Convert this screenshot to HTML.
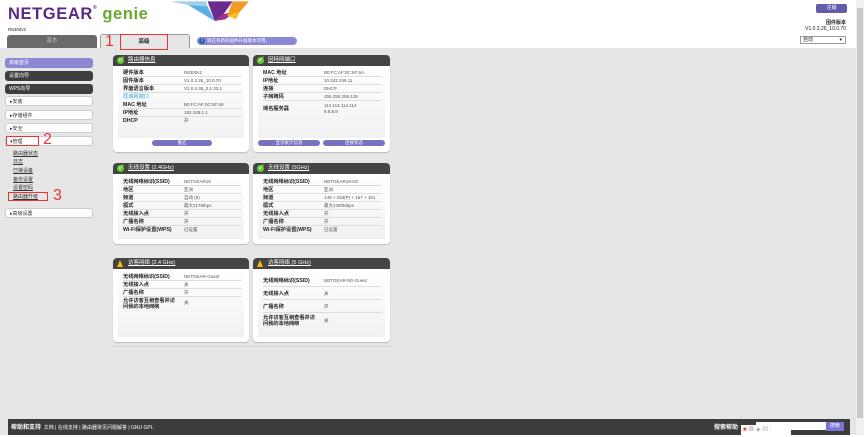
<!DOCTYPE html>
<html><head><meta charset="utf-8">
<style>
*{margin:0;padding:0;box-sizing:border-box}
body{width:864px;height:435px;overflow:hidden;background:#fff;position:relative;font-family:"Liberation Sans","Noto Sans CJK SC",sans-serif;font-size:5.5px;color:#222}
.a{position:absolute}
.gray{left:0;top:48px;width:856px;height:387px;background:#e6e6e6}
.sb{left:856px;top:0;width:8px;height:435px;background:#f0f0f0}
.sb i{position:absolute;left:1px;top:8px;width:6px;height:410px;background:#c8c8c8}
.side{left:5px;width:88px;height:10px;border-radius:3px;font-size:5px;line-height:10px;padding-left:4px}
.dk{background:#3e3e3e;color:#fff}
.wh{background:#fff;border:1px solid #ccc;color:#333}
.sub{left:13px;font-size:5px;color:#333;text-decoration:underline}
.red{border:1.2px solid #e33}
.rn{color:#e33;font-size:16px;font-family:"Liberation Sans",sans-serif}
.pan{background:#fff;border-radius:4px;box-shadow:0 1px 1px #bbb}
.ph{position:absolute;left:0;top:0;right:0;height:11px;background:#444;border-radius:4px 4px 0 0;color:#fff;font-size:5.5px;line-height:11px;padding-left:15px;text-decoration:underline}
.ck{position:absolute;left:4px;top:2px;width:7px;height:7px;border-radius:50%;background:#6c3;color:#fff;font-size:6px;line-height:7px;text-align:center}
.wr{position:absolute;left:4px;top:2px;width:0;height:0;border-left:3.5px solid transparent;border-right:3.5px solid transparent;border-bottom:7px solid #fb0}
.inner{position:absolute;left:5px;right:5px;top:13px;bottom:5px;background:linear-gradient(#fff,#f1f1f1)}
.r{position:absolute;left:5px;right:3px;border-bottom:1px solid #ddd;height:8px;font-size:5.2px;line-height:8px;font-weight:bold}
.r span{position:absolute;left:61px;font-weight:normal;color:#555;font-size:4.5px}
.btn{position:absolute;height:6px;border-radius:3px;background:#7873c0;color:#fff;font-size:4.5px;line-height:6px;text-align:center}
.ft{left:8px;top:419px;width:842px;height:16px;background:#3c3c3c;color:#fff;font-size:5px;line-height:18px;padding-left:3px}
</style></head><body>
<div class="a gray"></div>
<div class="a sb"><i></i></div>

<div class="a" style="left:8px;top:5px;font-size:16.5px;font-weight:bold;color:#5a2a82;letter-spacing:.6px">NETGEAR<span style="font-size:5px;vertical-align:top">®</span> <span style="color:#6aa632;font-weight:bold">genie</span></div>
<div class="a" style="left:8px;top:27px;font-size:4.5px">R6300v2</div>
<svg class="a" style="left:170px;top:0" width="85" height="25" viewBox="0 0 95 25"><polygon points="0,0 40,0 42,6 20,4" fill="#9cd0ee"/><polygon points="20,4 42,6 50,22 30,10" fill="#5ab0e0"/><polygon points="42,0 70,0 60,14 50,22" fill="#6a2a90"/><polygon points="50,22 60,14 72,12 62,20" fill="#a0308a"/><polygon points="70,0 88,0 78,12 64,16" fill="#f39a22"/><polygon points="64,16 78,12 74,20" fill="#f7c21e"/></svg>

<div class="a" style="left:816px;top:4px;width:31px;height:9px;background:#625caa;border-radius:2px;color:#fff;font-size:5px;text-align:center;line-height:9px">注销</div>
<div class="a" style="left:780px;top:19px;width:66px;text-align:right;font-size:5px;font-weight:bold">固件版本</div>
<div class="a" style="left:780px;top:26px;width:66px;text-align:right;font-size:5px">V1.0.3.26_10.0.70</div>
<div class="a" style="left:800px;top:36px;width:46px;height:8px;border:1px solid #999;background:#fff;font-size:5px;line-height:6px;padding-left:2px">自动<span style="position:absolute;right:3px">▾</span></div>

<div class="a" style="left:7px;top:35px;width:90px;height:13px;background:#6a6a6a;border-radius:3px 3px 0 0;color:#bbb;font-size:5.5px;text-align:center;line-height:12px">基本</div>
<div class="a" style="left:100px;top:34px;width:90px;height:14px;background:#e6e6e6;border:1px solid #999;border-bottom:none;border-radius:3px 3px 0 0"></div>
<div class="a red" style="left:120px;top:34px;width:48px;height:16px;font-size:5.5px;text-align:center;line-height:14px;font-weight:bold">高级</div>
<div class="a rn" style="left:105px;top:33px">1</div>
<div class="a" style="left:197px;top:37px;width:100px;height:8px;background:#8d88d6;border-radius:4px;color:#fff;font-size:4.5px;line-height:8px;padding-left:10px">现在有新的固件升级版本可用。<span style="position:absolute;left:2px;top:1px;width:6px;height:6px;border-radius:50%;background:#2260b0;font-size:5px;line-height:6px;text-align:center">i</span></div>

<div class="a side" style="top:58px;background:#8d88d4;color:#fff">高级首页</div>
<div class="a side dk" style="top:71px">设置向导</div>
<div class="a side dk" style="top:84px">WPS向导</div>
<div class="a side wh" style="top:96px">▸安装</div>
<div class="a side wh" style="top:110px">▸存储组件</div>
<div class="a side wh" style="top:123px">▸安全</div>
<div class="a side wh" style="top:136px">▾管理</div>
<div class="a red" style="left:6px;top:136px;width:33px;height:10px"></div>
<div class="a rn" style="left:43px;top:131px">2</div>
<div class="a sub" style="top:150px">路由器状态</div>
<div class="a sub" style="top:158px">日志</div>
<div class="a sub" style="top:167px">已接设备</div>
<div class="a sub" style="top:176px">备份设置</div>
<div class="a sub" style="top:184px">设置密码</div>
<div class="a sub" style="top:193px">路由器升级</div>
<div class="a red" style="left:8px;top:192px;width:40px;height:9px"></div>
<div class="a rn" style="left:53px;top:187px">3</div>
<div class="a side wh" style="top:208px">▸高级设置</div>

<div class="a pan" style="left:113px;top:55px;width:136px;height:97px"><div class="ph"><i class="ck">✓</i>路由器信息</div><div class="inner" style="bottom:14px">
<div class="r" style="top:1px">硬件版本<span>R6300v2</span></div>
<div class="r" style="top:9px">固件版本<span>V1.0.3.26_10.0.70</span></div>
<div class="r" style="top:17px">界面语言版本<span>V1.0.4.36_2.1.33.1</span></div>
<div class="r" style="top:25px;color:#3aa0d8;border:none;font-weight:normal">局域网端口</div>
<div class="r" style="top:33px">MAC 地址<span>B0:FC:AF:0C:5F:69</span></div>
<div class="r" style="top:41px">IP地址<span>192.168.1.1</span></div>
<div class="r" style="top:49px;border:none">DHCP<span>开</span></div>
</div><div class="btn" style="left:39px;top:85px;width:60px">重启</div></div>

<div class="a pan" style="left:253px;top:55px;width:137px;height:97px"><div class="ph"><i class="ck">✓</i>因特网端口</div><div class="inner" style="bottom:14px">
<div class="r" style="top:1px">MAC 地址<span>B0:FC:AF:0C:5F:6A</span></div>
<div class="r" style="top:9px">IP地址<span>10.242.249.11</span></div>
<div class="r" style="top:17px">连接<span>DHCP</span></div>
<div class="r" style="top:25px">子网掩码<span>255.255.255.128</span></div>
<div class="r" style="top:33px;height:16px;line-height:16px;border:none">域名服务器<span style="line-height:6px;top:2px">114.114.114.114<br>8.8.8.8</span></div>
</div><div class="btn" style="left:5px;top:85px;width:62px">显示统计信息</div><div class="btn" style="left:70px;top:85px;width:62px">连接状态</div></div>

<div class="a pan" style="left:113px;top:163px;width:136px;height:81px"><div class="ph"><i class="ck">✓</i>无线设置 (2.4GHz)</div><div class="inner">
<div class="r" style="top:2px">无线网络标识(SSID)<span>NETGEAR19</span></div>
<div class="r" style="top:10px">地区<span>亚洲</span></div>
<div class="r" style="top:18px">频道<span>自动 (6)</span></div>
<div class="r" style="top:26px">模式<span>最大217Mbps</span></div>
<div class="r" style="top:34px">无线接入点<span>开</span></div>
<div class="r" style="top:42px">广播名称<span>开</span></div>
<div class="r" style="top:50px;border:none">Wi-Fi保护设置(WPS)<span>已设置</span></div>
</div></div>
<div class="a pan" style="left:253px;top:163px;width:137px;height:81px"><div class="ph"><i class="ck">✓</i>无线设置 (5GHz)</div><div class="inner">
<div class="r" style="top:2px">无线网络标识(SSID)<span>NETGEAR19-5G</span></div>
<div class="r" style="top:10px">地区<span>亚洲</span></div>
<div class="r" style="top:18px">频道<span>149 + 153(P) + 157 + 161</span></div>
<div class="r" style="top:26px">模式<span>最大1300Mbps</span></div>
<div class="r" style="top:34px">无线接入点<span>开</span></div>
<div class="r" style="top:42px">广播名称<span>开</span></div>
<div class="r" style="top:50px;border:none">Wi-Fi保护设置(WPS)<span>已设置</span></div>
</div></div>

<div class="a pan" style="left:113px;top:258px;width:136px;height:84px"><div class="ph"><i class="wr"></i>访客网络 (2.4 GHz)</div><div class="inner">
<div class="r" style="top:2px">无线网络标识(SSID)<span>NETGEAR-Guest</span></div>
<div class="r" style="top:10px">无线接入点<span>关</span></div>
<div class="r" style="top:18px">广播名称<span>开</span></div>
<div class="r" style="top:26px;height:14px;line-height:6px;padding-top:1px;border:none">允许访客互相查看并访<br>问我的本地网络<span style="top:3px">关</span></div>
</div></div>
<div class="a pan" style="left:253px;top:258px;width:137px;height:84px"><div class="ph"><i class="wr"></i>访客网络 (5 GHz)</div><div class="inner">
<div class="r" style="top:4px;height:12px;line-height:12px">无线网络标识(SSID)<span>NETGEAR-5G-Guest</span></div>
<div class="r" style="top:17px;height:12px;line-height:12px">无线接入点<span>关</span></div>
<div class="r" style="top:30px;height:12px;line-height:12px">广播名称<span>开</span></div>
<div class="r" style="top:44px;height:14px;line-height:6px;border:none">允许访客互相查看并访<br>问我的本地网络<span style="top:3px">关</span></div>
</div></div>
<div class="a" style="left:112px;top:346px;width:280px;height:1px;background:#d4d4d4"></div>

<div class="a ft"><b style="font-size:6px">帮助和支持</b> &nbsp;文档 | 在线支持 | 路由器常见问题解答 | GNU GPL
<span style="position:absolute;left:706px;font-weight:bold;font-size:6px">搜索帮助</span>
<span style="position:absolute;left:748px;top:3px;width:74px;height:8px;background:#fff"></span>
<span style="position:absolute;left:818px;top:3px;width:18px;height:9px;background:#7a74d8;text-align:center;line-height:9px">搜索</span></div>
<div class="a" style="left:741px;top:425px;width:50px;height:10px;background:#fff;font-size:6px;color:#999;line-height:10px;padding-left:2px"><span style="color:#e44">■</span> ▦ ◈ ▤ :</div>
</body></html>
